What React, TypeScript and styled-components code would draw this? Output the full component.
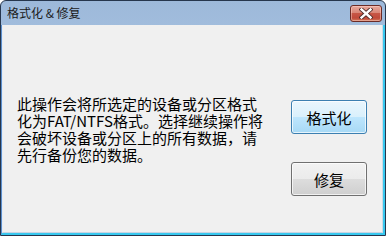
import styled, { createGlobalStyle } from 'styled-components';

const GlobalStyle = createGlobalStyle`
  html, body {
    margin: 0;
    padding: 0;
    background: #ffffff;
  }
  * {
    box-sizing: border-box;
  }
`;

const Window = styled.div`
  width: 386px;
  height: 236px;
  display: flex;
  flex-direction: column;
  border: 1px solid #26364d;
  border-radius: 6px 6px 0 0;
  background: linear-gradient(180deg, #9db9da 0%, #b3cbe7 60%, #bdd4ec 100%);
  font-family: "Noto Sans CJK SC", "Liberation Sans", sans-serif;
  overflow: hidden;
`;

const TitleBar = styled.div`
  height: 24px;
  flex: 0 0 24px;
  display: flex;
  align-items: flex-start;
  justify-content: space-between;
  padding: 0 3px 0 6px;
`;

const Title = styled.span`
  font-size: 12px;
  line-height: 24px;
  color: #1b1b1b;
`;

const CloseButton = styled.button`
  margin-top: 4px;
  width: 32px;
  height: 17px;
  padding: 0;
  display: flex;
  align-items: center;
  justify-content: center;
  border: 1px solid #6b2b26;
  border-radius: 3px;
  background: linear-gradient(180deg, #e8a89d 0%, #d98677 45%, #c75646 50%, #c0493a 80%, #d27a5c 100%);
  box-shadow: inset 0 0 0 1px rgba(255, 220, 210, 0.45);
`;

const Frame = styled.div`
  flex: 1;
  display: flex;
  border-left: 1px solid #5c8fce;
  border-right: 2px solid #38c8ef;
  border-bottom: 2px solid #38c8ef;
`;

const Body = styled.div`
  flex: 1;
  display: flex;
  justify-content: space-between;
  padding: 0 15px 0 14px;
  background: #f0f0f0;
  border-left: 1px solid #e4ecf5;
  border-right: 1px solid #cfd9e4;
  border-bottom: 1px solid #c7d4e3;
`;

const Message = styled.div`
  align-self: center;
  margin-top: 1px;
  font-size: 15px;
  line-height: 17px;
  color: #000000;
`;

const Line = styled.span`
  display: block;
  white-space: nowrap;
`;

const Actions = styled.div`
  display: flex;
  flex-direction: column;
  gap: 28px;
  padding-top: 75px;
`;

const ActionButton = styled.button<{ $primary?: boolean }>`
  width: 76px;
  height: 34px;
  padding: 0;
  font-family: "Noto Sans CJK SC", "Liberation Sans", sans-serif;
  font-size: 15px;
  color: #000000;
  border-radius: 3px;
  border: 1px solid ${(p) => (p.$primary ? '#3c7fb1' : '#707070')};
  background: ${(p) =>
    p.$primary
      ? 'linear-gradient(180deg, #eaf6fd 0%, #d9f0fc 50%, #bee6fd 50%, #a7d9f5 100%)'
      : 'linear-gradient(180deg, #f2f2f2 0%, #ebebeb 50%, #dddddd 50%, #cfcfcf 100%)'};
  box-shadow: inset 0 0 0 1px rgba(255, 255, 255, 0.7);
`;

const lines = [
  '此操作会将所选定的设备或分区格式',
  '化为FAT/NTFS格式。选择继续操作将',
  '会破坏设备或分区上的所有数据，请',
  '先行备份您的数据。',
];

const CloseIcon = () => (
  <svg width="14" height="11" viewBox="0 0 14 11">
    <path d="M2.5 1.5 L11.5 9.5 M11.5 1.5 L2.5 9.5" stroke="#4a2a28" strokeWidth="4.2" strokeLinecap="square" />
    <path d="M2.5 1.5 L11.5 9.5 M11.5 1.5 L2.5 9.5" stroke="#ffffff" strokeWidth="2.4" strokeLinecap="square" />
  </svg>
);

export default function App() {
  return (
    <>
      <GlobalStyle />
      <Window>
        <TitleBar>
          <Title>格式化 &amp; 修复</Title>
          <CloseButton aria-label="关闭">
            <CloseIcon />
          </CloseButton>
        </TitleBar>
        <Frame>
          <Body>
            <Message>
              {lines.map((line, i) => (
                <Line key={i}>{line}</Line>
              ))}
            </Message>
            <Actions>
              <ActionButton $primary>格式化</ActionButton>
              <ActionButton>修复</ActionButton>
            </Actions>
          </Body>
        </Frame>
      </Window>
    </>
  );
}
